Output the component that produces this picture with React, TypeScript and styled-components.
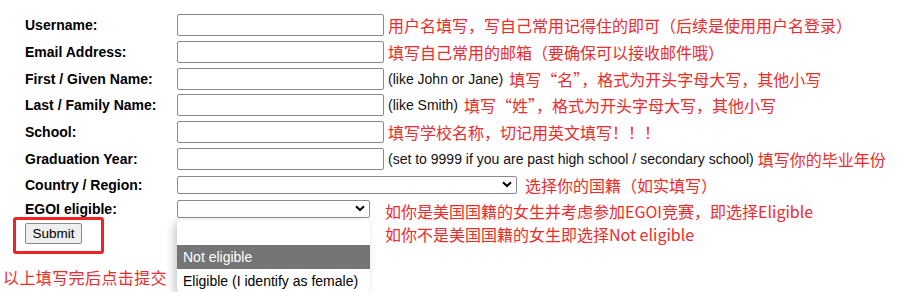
import React from 'react';
import styled, { createGlobalStyle } from 'styled-components';

const GlobalStyle = createGlobalStyle`
  body {
    margin: 0;
    background: #ffffff;
    font-family: "Liberation Sans", Arial, "Noto Sans CJK SC", sans-serif;
  }
`;

const Page = styled.div`
  width: 905px;
  height: 292px;
  overflow: hidden;
  padding-top: 12px;
  box-sizing: border-box;
`;

const Row = styled.div<{ $h: number }>`
  display: flex;
  align-items: center;
  height: ${(p) => p.$h}px;
  padding-left: 25px;
  position: relative;
`;

const Label = styled.label`
  width: 152px;
  flex: none;
  font-size: 14px;
  font-weight: bold;
  color: #000;
`;

const TextInput = styled.input`
  width: 207px;
  height: 22px;
  box-sizing: border-box;
  border: 1px solid #8a8a8a;
  border-radius: 2px;
  margin: 0;
  padding: 0 4px;
  flex: none;
`;

const Select = styled.div<{ $w: number }>`
  width: ${(p) => p.$w}px;
  height: 18px;
  box-sizing: border-box;
  border: 1px solid #8a8a8a;
  border-radius: 2px;
  flex: none;
  display: flex;
  align-items: center;
  justify-content: flex-end;
  padding-right: 4px;
  background: #fff;
`;

const Hint = styled.span`
  font-size: 14px;
  color: #111;
  margin-left: 4px;
  white-space: nowrap;
`;

const Note = styled.span<{ $gap?: number }>`
  font-family: "Noto Sans CJK SC", sans-serif;
  font-size: 16px;
  color: #f02a2a;
  margin-left: ${(p) => p.$gap ?? 4}px;
  white-space: nowrap;
  line-height: 22px;
`;

const NoteBlock = styled.div`
  font-family: "Noto Sans CJK SC", sans-serif;
  font-size: 16px;
  line-height: 23px;
  color: #f02a2a;
  margin-left: 15px;
  align-self: flex-start;
  margin-top: 3px;
  white-space: nowrap;
`;

const SubmitBox = styled.div`
  margin-left: 13px;
  margin-top: -3px;
  width: 91px;
  height: 37px;
  box-sizing: border-box;
  border: 3px solid #f02222;
  border-radius: 3px;
  padding: 3px 0 0 9px;
`;

const Button = styled.button`
  width: 57px;
  height: 21px;
  padding: 0;
  font-family: "Liberation Sans", Arial, sans-serif;
  font-size: 13.5px;
  color: #000;
  background: #efefef;
  border: 1px solid #8a8a8a;
  border-radius: 2px;
`;

const BottomNote = styled.div`
  font-family: "Noto Sans CJK SC", sans-serif;
  font-size: 16px;
  color: #f02a2a;
  margin: 12px 0 0 3px;
  line-height: 22px;
  letter-spacing: 0.4px;
`;

const Menu = styled.div`
  position: absolute;
  left: 177px;
  top: 23px;
  width: 193px;
  background: #fff;
  border-radius: 5px;
  box-shadow: -3px 2px 8px rgba(0, 0, 0, 0.22);
  overflow: hidden;
  z-index: 2;
`;

const Option = styled.div<{ $active?: boolean; $h?: number }>`
  height: ${(p) => p.$h ?? 24}px;
  line-height: ${(p) => p.$h ?? 24}px;
  padding-left: 6px;
  font-size: 14px;
  color: ${(p) => (p.$active ? '#fff' : '#000')};
  background: ${(p) => (p.$active ? '#757575' : 'transparent')};
  white-space: nowrap;
`;

const Chevron = () => (
  <svg width="10" height="7" viewBox="0 0 10 7">
    <path d="M1 1.2 L5 5 L9 1.2" fill="none" stroke="#000" strokeWidth="2" />
  </svg>
);

export default function App() {
  return (
    <Page>
      <GlobalStyle />
      <Row $h={26.7}>
        <Label>Username:</Label>
        <TextInput />
        <Note>用户名填写，写自己常用记得住的即可（后续是使用用户名登录）</Note>
      </Row>
      <Row $h={26.7}>
        <Label>Email Address:</Label>
        <TextInput />
        <Note>填写自己常用的邮箱（要确保可以接收邮件哦）</Note>
      </Row>
      <Row $h={26.7}>
        <Label>First / Given Name:</Label>
        <TextInput />
        <Hint>(like John or Jane)</Hint>
        <Note $gap={6}>填写“名”，格式为开头字母大写，其他小写</Note>
      </Row>
      <Row $h={26.7}>
        <Label>Last / Family Name:</Label>
        <TextInput />
        <Hint>(like Smith)</Hint>
        <Note $gap={6}>填写“姓”，格式为开头字母大写，其他小写</Note>
      </Row>
      <Row $h={26.7}>
        <Label>School:</Label>
        <TextInput />
        <Note>填写学校名称，切记用英文填写！！！</Note>
      </Row>
      <Row $h={26.7}>
        <Label>Graduation Year:</Label>
        <TextInput />
        <Hint>(set to 9999 if you are past high school / secondary school)</Hint>
        <Note $gap={4}>填写你的毕业年份</Note>
      </Row>
      <Row $h={25}>
        <Label>Country / Region:</Label>
        <Select $w={340}>
          <Chevron />
        </Select>
        <Note $gap={8}>选择你的国籍（如实填写）</Note>
      </Row>
      <Row $h={23}>
        <Label>EGOI eligible:</Label>
        <Select $w={193}>
          <Chevron />
        </Select>
        <NoteBlock>
          如你是美国国籍的女生并考虑参加EGOI竞赛，即选择Eligible
          <br />
          如你不是美国国籍的女生即选择Not eligible
        </NoteBlock>
        <Menu>
          <Option $h={25} />
          <Option $active>Not eligible</Option>
          <Option>Eligible (I identify as female)</Option>
        </Menu>
      </Row>
      <SubmitBox>
        <Button>Submit</Button>
      </SubmitBox>
      <BottomNote>以上填写完后点击提交</BottomNote>
    </Page>
  );
}
